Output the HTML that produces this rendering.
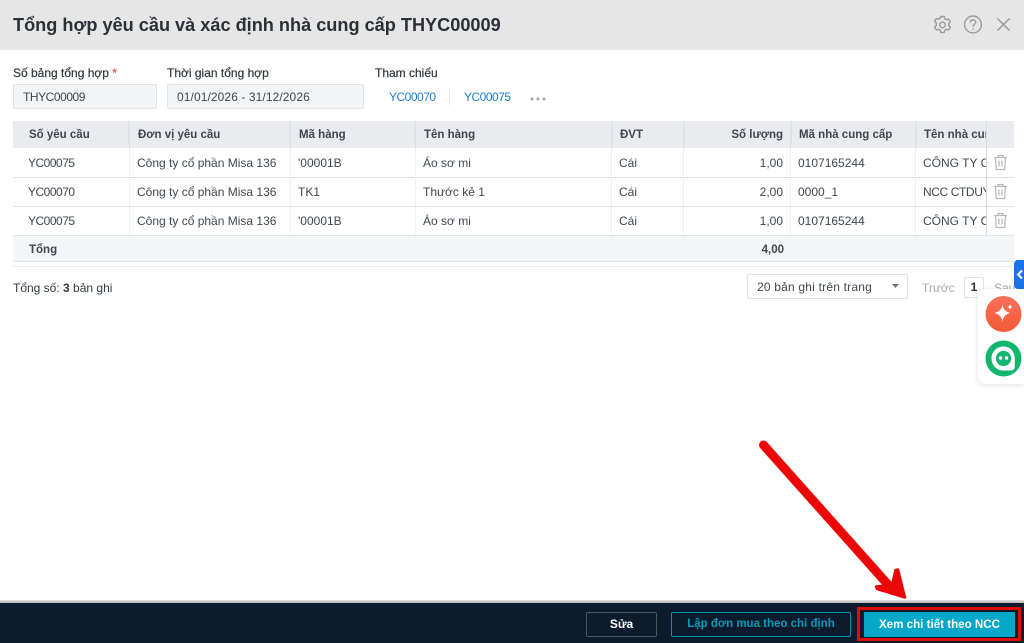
<!DOCTYPE html>
<html lang="vi"><head><meta charset="utf-8"><title>Tổng hợp yêu cầu</title>
<style>
*{box-sizing:border-box}
html,body{margin:0;padding:0;width:1024px;height:643px;overflow:hidden;background:#fff}
body{position:relative;font-family:"Liberation Sans",sans-serif;font-size:12px;color:#333a42}
.a{position:absolute;white-space:nowrap}
.h{font-weight:700;color:#3f464e;font-size:11.5px;line-height:16px}
.c{line-height:16px;font-size:12px;color:#40474f}
.y{letter-spacing:-.5px}
.l{font-size:12px;line-height:16px;color:#2d343b;-webkit-text-stroke:.2px #2d343b}
.vh{position:absolute;top:121px;width:2px;height:27px;background:#dfe2e7}
.vd{position:absolute;top:148px;width:1px;height:88px;border-left:1px dotted #dde2e6}
.hl{position:absolute;left:13px;width:1001px;height:1px;background:#dbe5e8}
</style></head><body>
<div class="a" style="left:0;top:0;width:1024px;height:50px;background:#e6e6e7"></div>
<div class="a" style="left:13px;top:12px;font-size:18.15px;line-height:26px;font-weight:700;color:#2b3036">Tổng hợp yêu cầu và xác định nhà cung cấp THYC00009</div>
<svg class="a" style="left:932px;top:14px" width="84" height="22" fill="none" stroke="#9a9a9a" stroke-width="1.4">
<path d="M8.8 2.5h3.4l.6 2.3 1.600.9 2.300-.7 1.700 2.900-1.700 1.700v1.800l1.700 1.700-1.700 2.900-2.300-.7-1.600.9-.6 2.300H8.800l-.6-2.300-1.600-.9-2.300.7-1.700-2.900 1.700-1.700V9.100L2.600 7.400l1.700-2.900 2.300.7 1.600-.9z" stroke-linejoin="round"/><circle cx="10.5" cy="10.9" r="2.8"/>
<circle cx="41" cy="10.5" r="8.4"/><path d="M38.300 8.400c.2-1.600 1.300-2.400 2.800-2.400 1.600 0 2.700 1 2.700 2.300 0 2.200-2.800 2.200-2.800 4.400M41 14.400v1.400"/>
<path d="M65.500 4.500l12 12M77.500 4.500l-12 12" stroke-width="1.500"/></svg>

<div class="a l" style="left:13px;top:65px">Số bảng tổng hợp <span style="color:#e5484d;-webkit-text-stroke:.2px #e5484d">*</span></div>
<div class="a l" style="left:167px;top:65px">Thời gian tổng hợp</div>
<div class="a l" style="left:375px;top:65px">Tham chiếu</div>
<div class="a c" style="left:13px;top:84px;width:144px;height:25px;background:#f3f4f5;border:1px solid #e1e4e7;border-radius:2px;padding:4px 9px;letter-spacing:-.45px">THYC00009</div>
<div class="a c" style="left:167px;top:84px;width:197px;height:25px;background:#f3f4f5;border:1px solid #e1e4e7;border-radius:2px;padding:4px 9px;letter-spacing:.09px">01/01/2026 - 31/12/2026</div>
<div class="a c y" style="left:389px;top:89px;color:#1b7fc9">YC00070</div>
<div class="a" style="left:449px;top:89px;width:1px;height:16px;background:#e2e5e8"></div>
<div class="a c y" style="left:464px;top:89px;color:#1b7fc9">YC00075</div>
<svg class="a" style="left:530px;top:96px" width="17" height="6" fill="#a0a5aa"><circle cx="2" cy="3" r="1.500"/><circle cx="8" cy="3" r="1.500"/><circle cx="14" cy="3" r="1.500"/></svg>

<div class="a" style="left:13px;top:121px;width:1001px;height:27px;background:#e9ebef"></div>
<div class="a" style="left:13px;top:236px;width:1001px;height:26px;background:#f4f5f6"></div>
<div class="hl" style="top:177px"></div><div class="hl" style="top:206px"></div><div class="hl" style="top:235px"></div><div class="hl" style="top:261px"></div><div class="hl" style="top:266px;background:#e6ebee"></div>
<div class="vh" style="left:128px"></div><div class="vh" style="left:289px"></div><div class="vh" style="left:414px"></div><div class="vh" style="left:611px"></div><div class="vh" style="left:683px"></div><div class="vh" style="left:790px"></div><div class="vh" style="left:915px"></div>
<div class="vd" style="left:129px"></div><div class="vd" style="left:290px"></div><div class="vd" style="left:415px"></div><div class="vd" style="left:611px"></div><div class="vd" style="left:683px"></div><div class="vd" style="left:790px"></div><div class="vd" style="left:915px"></div>

<div class="a h" style="left:29px;top:127px">Số yêu cầu</div>
<div class="a h" style="left:138px;top:127px">Đơn vị yêu cầu</div>
<div class="a h" style="left:299px;top:127px">Mã hàng</div>
<div class="a h" style="left:424px;top:127px">Tên hàng</div>
<div class="a h" style="left:620px;top:127px">ĐVT</div>
<div class="a h" style="right:241px;top:127px">Số lượng</div>
<div class="a h" style="left:799px;top:127px">Mã nhà cung cấp</div>
<div class="a" style="left:924px;top:121px;width:62px;height:27px;overflow:hidden"><div class="h" style="position:absolute;left:0;top:6px">Tên nhà cung cấp</div></div>

<div class="a c y" style="left:28px;top:155px">YC00075</div><div class="a c" style="left:137px;top:155px">Công ty cổ phần Misa 136</div><div class="a c" style="left:298px;top:155px">'00001B</div><div class="a c" style="left:423px;top:155px">Áo sơ mi</div><div class="a c" style="left:619px;top:155px">Cái</div><div class="a c" style="right:241px;top:155px">1,00</div><div class="a c" style="left:798px;top:155px">0107165244</div>
<div class="a" style="left:923px;top:148px;width:63px;height:29px;overflow:hidden"><div class="c" style="position:absolute;left:0;top:7px">CÔNG TY CỔ PHẦN</div></div>

<div class="a c y" style="left:28px;top:184px">YC00070</div><div class="a c" style="left:137px;top:184px">Công ty cổ phần Misa 136</div><div class="a c" style="left:298px;top:184px">TK1</div><div class="a c" style="left:423px;top:184px">Thước kẻ 1</div><div class="a c" style="left:619px;top:184px">Cái</div><div class="a c" style="right:241px;top:184px">2,00</div><div class="a c" style="left:798px;top:184px">0000_1</div>
<div class="a" style="left:923px;top:177px;width:63px;height:29px;overflow:hidden"><div class="c" style="position:absolute;left:0;top:7px;letter-spacing:-.4px">NCC CTDUY</div></div>

<div class="a c y" style="left:28px;top:213px">YC00075</div><div class="a c" style="left:137px;top:213px">Công ty cổ phần Misa 136</div><div class="a c" style="left:298px;top:213px">'00001B</div><div class="a c" style="left:423px;top:213px">Áo sơ mi</div><div class="a c" style="left:619px;top:213px">Cái</div><div class="a c" style="right:241px;top:213px">1,00</div><div class="a c" style="left:798px;top:213px">0107165244</div>
<div class="a" style="left:923px;top:206px;width:63px;height:29px;overflow:hidden"><div class="c" style="position:absolute;left:0;top:7px">CÔNG TY CỔ PHẦN</div></div>

<div class="a" style="left:986px;top:121px;width:1px;height:114px;background:#d6dbdf"></div>
<svg class="a" style="left:993px;top:154px" width="15" height="76" fill="none" stroke="#b4b8bc" stroke-width="1.200">
<path d="M1 3.500h13M5 3.500V1.500h5v2M2.500 3.500l.8 12h8.400l.8-12M6 6.500v6M9 6.500v6"/>
<path transform="translate(0,29)" d="M1 3.500h13M5 3.500V1.500h5v2M2.500 3.500l.8 12h8.400l.8-12M6 6.500v6M9 6.500v6"/>
<path transform="translate(0,58)" d="M1 3.500h13M5 3.500V1.500h5v2M2.500 3.500l.8 12h8.400l.8-12M6 6.500v6M9 6.500v6"/></svg>

<div class="a h" style="left:29px;top:242px;font-size:11.500px">Tổng</div>
<div class="a h" style="right:240px;top:242px">4,00</div>

<div class="a c" style="left:13px;top:280px;color:#333a42">Tổng số: <b>3</b> bản ghi</div>
<div class="a c" style="left:747px;top:274px;width:161px;height:25px;border:1px solid #dfe2e5;border-radius:2px;padding:4px 9px;letter-spacing:.2px">20 bản ghi trên trang</div>
<svg class="a" style="left:892px;top:284px" width="7" height="4"><path d="M0 0h7L3.500 4z" fill="#6f757b"/></svg>
<div class="a c" style="left:922px;top:280px;color:#a5a9ad">Trước</div>
<div class="a" style="left:964px;top:277px;width:20px;height:21px;border:1px solid #dfe2e5;border-radius:2px;text-align:center;font-weight:700;line-height:19px;color:#2b3036">1</div>
<div class="a c" style="left:994px;top:280px;color:#a5a9ad">Sau</div>

<div class="a" style="left:1014px;top:260px;width:10px;height:29px;background:#1a73e8;border-radius:4px 0 0 4px"></div>
<svg class="a" style="left:1016px;top:269px" width="8" height="11" fill="none" stroke="#fff" stroke-width="2"><path d="M6 1.500L2 5.500l4 4"/></svg>
<div class="a" style="left:978px;top:289px;width:46px;height:95px;background:#fff;border-radius:7px 0 0 7px;box-shadow:0 1px 6px rgba(0,0,0,.13)"></div>
<svg class="a" style="left:985px;top:296px" width="37" height="81">
<defs><linearGradient id="o" x1="0" y1="0" x2="0" y2="1"><stop offset="0" stop-color="#f8705a"/><stop offset="1" stop-color="#f45a34"/></linearGradient></defs>
<circle cx="18.500" cy="18" r="18" fill="url(#o)"/>
<path d="M17.500 8.500c1 5 3 7 7.500 8.500-4.500 1.500-6.500 3.500-7.500 8.500-1-5-3-7-8-8.500 5-1.500 7-3.500 8-8.500z" fill="#fff"/>
<path d="M25 8l.8 2.200L28 11l-2.200.8L25 14l-.8-2.200L22 11l2.200-.8z" fill="#fff"/>
<circle cx="18.500" cy="62.500" r="18" fill="#13b66f"/>
<path d="M18.500 50.500c-6.800 0-12 5.200-12 12s5.200 12 12 12h7.500c2 0 3.800-1.600 3.800-3.800v-8.200c0-6.800-4.500-12-11.300-12z" fill="#fff"/>
<circle cx="18.500" cy="62.500" r="7.600" fill="#13b66f"/>
<circle cx="15.500" cy="62" r="1.700" fill="#fff"/><circle cx="21.500" cy="62" r="1.700" fill="#fff"/>
</svg>

<div class="a" style="left:0;top:600px;width:1024px;height:3px;background:linear-gradient(#e4e4e4,#b5b5b5)"></div>
<div class="a" style="left:0;top:603px;width:1024px;height:40px;background:#0c1c2e"></div>
<div class="a" style="left:586px;top:612px;width:71px;height:25px;border:1px solid #4c5561;border-radius:2px;color:#fff;font-weight:700;text-align:center;line-height:23px">Sửa</div>
<div class="a" style="left:671px;top:612px;width:180px;height:25px;border:1px solid #0e8fab;border-radius:2px;color:#0c98b6;font-weight:700;font-size:11.5px;text-align:center;line-height:23px">Lập đơn mua theo chỉ định</div>
<div class="a" style="left:857px;top:607px;width:164px;height:34px;border:3px solid #e60a0a"></div>
<div class="a" style="left:864px;top:612px;width:151px;height:25px;background:#05a8c8;color:#fff;font-weight:700;font-size:11.6px;text-align:center;line-height:25px;border-radius:1px">Xem chi tiết theo NCC</div>

<svg class="a" style="left:740px;top:425px" width="180" height="190" fill="none">
<path d="M23.500 20L151 163" stroke="#ec0606" stroke-width="9" stroke-linecap="round"/>
<path d="M155.500 145l2.500-.5L165 172.500l-28-8.500-1-2.500 16-1.500z" fill="#ec0606" stroke="#ec0606" stroke-width="2.500" stroke-linejoin="round"/>
</svg>
</body></html>
